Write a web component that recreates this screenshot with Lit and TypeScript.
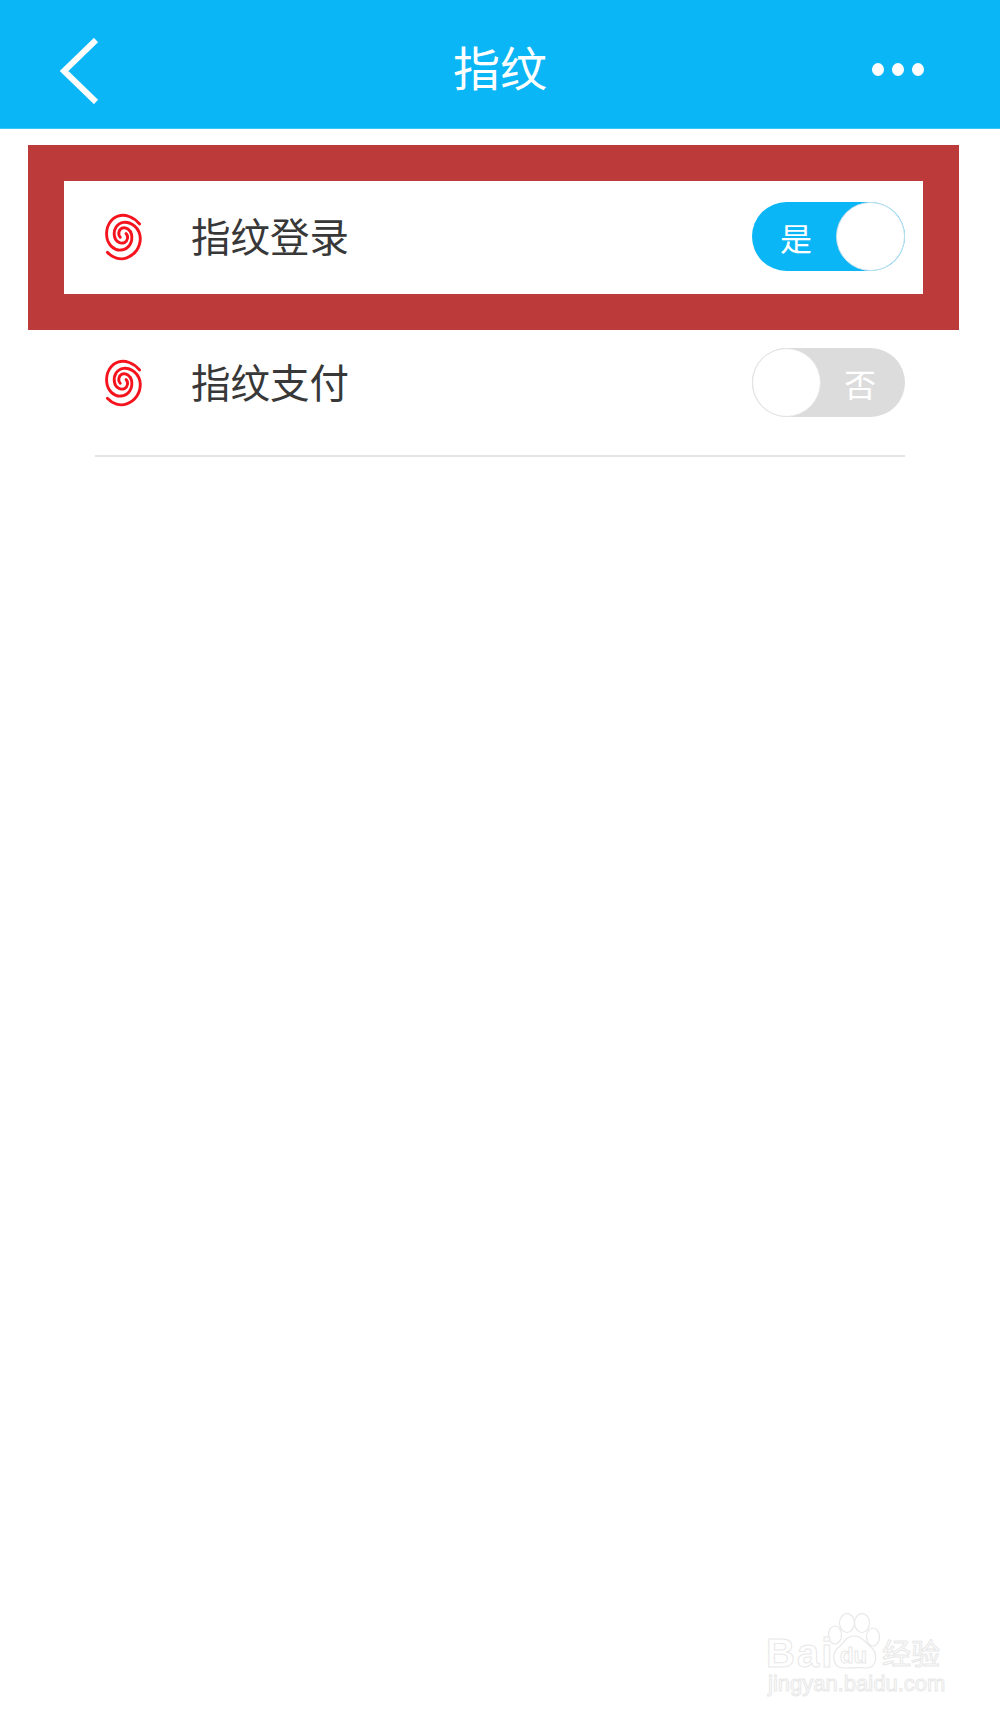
import { LitElement, html, css, svg } from "lit";
import { customElement } from "lit/decorators.js";

const print = () => html`<svg class="print" viewBox="40 30 120 155" fill="none" stroke="#f5141e" stroke-width="9" stroke-linecap="round">
  <path d="M150 67C130 45 105 36 85 42C60 50 45 75 48 105C50 130 70 150 92 148C115 146 130 125 125 100C122 85 108 75 95 80C85 85 82 100 90 108"/>
  <path d="M50 155C65 172 90 180 110 172C135 163 153 140 152 110C150 80 125 60 100 62C80 64 68 85 72 105C75 122 90 130 103 125C113 120 116 105 108 97"/>
</svg>`;

@customElement("app-toggle")
class AppToggle extends LitElement {
  static properties = { on: { type: Boolean }, label: {} };
  on = false;
  label = "";
  static styles = css`
    :host { display: block; flex: none; }
    .track { box-sizing: border-box; width: 153px; height: 69px; border-radius: 35px; display: flex; align-items: center; justify-content: space-between; font: 32px/1 "Noto Sans CJK SC", sans-serif; color: #fff; }
    .on { background: #0bb6f6; padding-left: 28px; }
    .off { background: #dcdcdc; padding-right: 29px; }
    .knob { box-sizing: border-box; width: 69px; height: 69px; border-radius: 50%; background: #fff; border: 1px solid #e2e2e2; }
    .on .knob { border-color: #c4e0ec; }
  `;
  render() {
    return this.on
      ? html`<div class="track on"><span>${this.label}</span><div class="knob"></div></div>`
      : html`<div class="track off"><div class="knob"></div><span>${this.label}</span></div>`;
  }
}

@customElement("app-root")
class AppRoot extends LitElement {
  static styles = css`
    :host { display: block; position: relative; height: 1719px; overflow: hidden; background: #fff; font-family: "Noto Sans CJK SC", sans-serif; }
    header { box-sizing: border-box; height: 129px; background: #0bb6f6; border-bottom: 1px solid #3cc6f8; display: grid; grid-template-columns: 1fr auto 1fr; align-items: center; padding: 10px 60px 0; }
    .back { width: 40px; height: 66px; display: block; margin-top: 3px; }
    h1 { margin: 0 0 8px; text-align: center; color: #fff; font-size: 47px; font-weight: 400; line-height: 1; }
    .dots { display: flex; gap: 8px; justify-self: end; margin-right: 16px; }
    .dots i { width: 12px; height: 13px; border-radius: 50%; background: #fff; display: block; }
    .box { margin: 16px 41px 0 28px; border: 36px solid #bc3a3a; height: 113px; display: flex; }
    .row { display: flex; align-items: center; width: 810px; flex: none; }
    .box .row { margin-left: 31px; height: 111px; }
    .plain { margin: 0 95px; height: 105px; padding-bottom: 20px; border-bottom: 2px solid #e6e6e6; }
    .print { width: 39px; height: 50px; margin-left: 9px; flex: none; display: block; }
    .name { margin-left: 48px; margin-bottom: 3px; flex: 1; font-size: 39.5px; line-height: 1; color: #383838; }
    .mark { position: absolute; left: 766px; top: 1613px; width: 182px; height: 84px; color: #fff; -webkit-text-stroke: 1px #e8e8e8; pointer-events: none; }
    .bai { position: absolute; left: 0; top: 20px; font: 700 40px/1 "Liberation Sans", sans-serif; letter-spacing: 2px; }
    .jy { position: absolute; left: 116px; top: 25px; font: 400 29px/1 "Noto Sans CJK SC", sans-serif; white-space: nowrap; }
    .url { position: absolute; left: 2px; top: 60px; font: 400 22px/1 "Liberation Sans", sans-serif; white-space: nowrap; }
    .du { position: absolute; left: 74px; top: 32px; font: 700 22px/1 "Liberation Sans", sans-serif; }
    .paw { position: absolute; left: 62px; top: 0; width: 52px; height: 56px; }
  `;
  render() {
    return html`
      <header>
        <svg class="back" viewBox="0 0 40 66" fill="none" stroke="#fff" stroke-width="6"><path d="M36 2L4 33L36 64"/></svg>
        <h1>指纹</h1>
        <div class="dots"><i></i><i></i><i></i></div>
      </header>
      <div class="box">
        <div class="row">${print()}<div class="name">指纹登录</div><app-toggle on label="是"></app-toggle></div>
      </div>
      <div class="row plain">${print()}<div class="name">指纹支付</div><app-toggle label="否"></app-toggle></div>
      <div class="mark">
        <svg class="paw" viewBox="0 0 52 56" fill="none" stroke="#e8e8e8" stroke-width="1.2">
          ${svg`<ellipse cx="7" cy="22" rx="6.5" ry="9"/><ellipse cx="19" cy="10" rx="7.5" ry="9.5"/><ellipse cx="34" cy="10" rx="7.5" ry="9.5"/><ellipse cx="45" cy="24" rx="6.5" ry="9"/>
          <path d="M26 23C18 23 16 30 11 34C4 39 3 54 15 55C22 55 30 54 38 55C49 55 50 42 44 35C38 30 34 23 26 23Z"/>`}
        </svg>
        <span class="bai">Bai</span><span class="du">du</span><span class="jy">经验</span>
        <span class="url">jingyan.baidu.com</span>
      </div>
    `;
  }
}
